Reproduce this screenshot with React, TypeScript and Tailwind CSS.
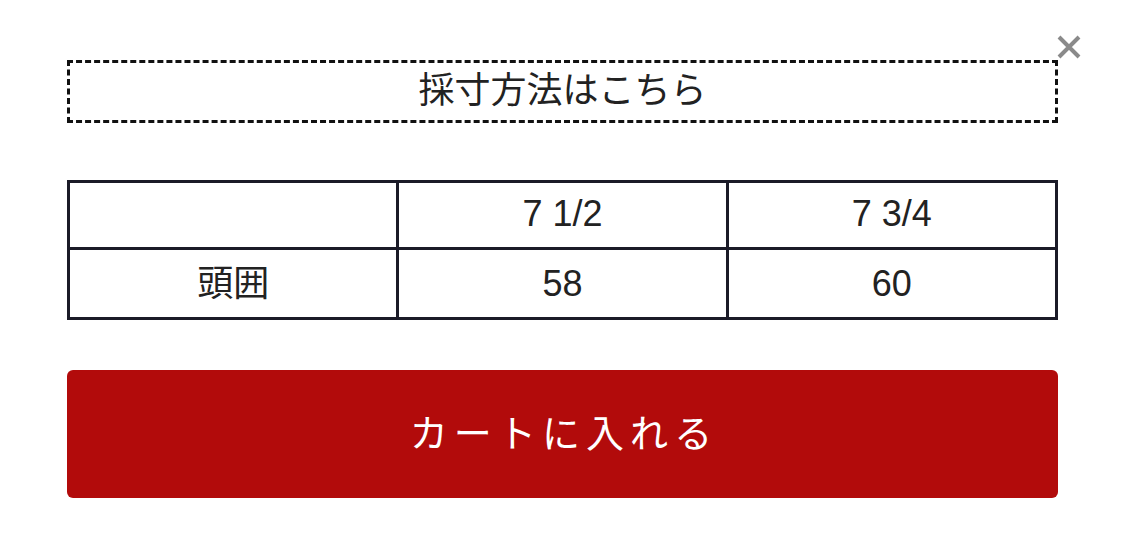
import React from "react";

const sizes = [
  { label: "7 1/2", head: "58" },
  { label: "7 3/4", head: "60" },
];

export default function App() {
  const font = {
    fontFamily: '"Liberation Sans", "Noto Sans CJK JP", sans-serif',
  };
  return (
    <div className="w-[1125px] h-[560px] bg-white relative text-[#222]" style={font}>
      {/* close button */}
      <button className="absolute left-[1057px] top-[35px] w-[24px] h-[24px] text-[#8a8a8a]">
        <svg viewBox="0 0 24 24" className="w-full h-full" fill="none" stroke="currentColor" strokeWidth="4" strokeLinecap="butt">
          <path d="M2 2 L22 22 M22 2 L2 22" />
        </svg>
      </button>

      <div className="pt-[60px] px-[67px] flex flex-col">
        <a className="h-[63px] border-[3px] border-dashed border-[#111] flex items-center justify-center text-[36px] leading-none pb-[2px]">
          採寸方法はこちら
        </a>

        <table className="mt-[57px] w-full border-collapse table-fixed text-[36px] leading-none">
          <tbody>
            <tr className="h-[67px]">
              <td className="border-[3px] border-[#1b1b28] w-1/3"></td>
              {sizes.map((s) => (
                <td key={s.label} className="border-[3px] border-[#1b1b28] text-center align-middle pb-[2px]">
                  {s.label}
                </td>
              ))}
            </tr>
            <tr className="h-[70px]">
              <td className="border-[3px] border-[#1b1b28] text-center align-middle">頭囲</td>
              {sizes.map((s) => (
                <td key={s.head} className="border-[3px] border-[#1b1b28] text-center align-middle">
                  {s.head}
                </td>
              ))}
            </tr>
          </tbody>
        </table>

        <button className="mt-[50px] h-[128px] w-full rounded-[6px] bg-[#b20b0b] text-white text-[38px] tracking-[0.16em] leading-none flex items-center justify-center pl-[3px]">
          カートに入れる
        </button>
      </div>
    </div>
  );
}
